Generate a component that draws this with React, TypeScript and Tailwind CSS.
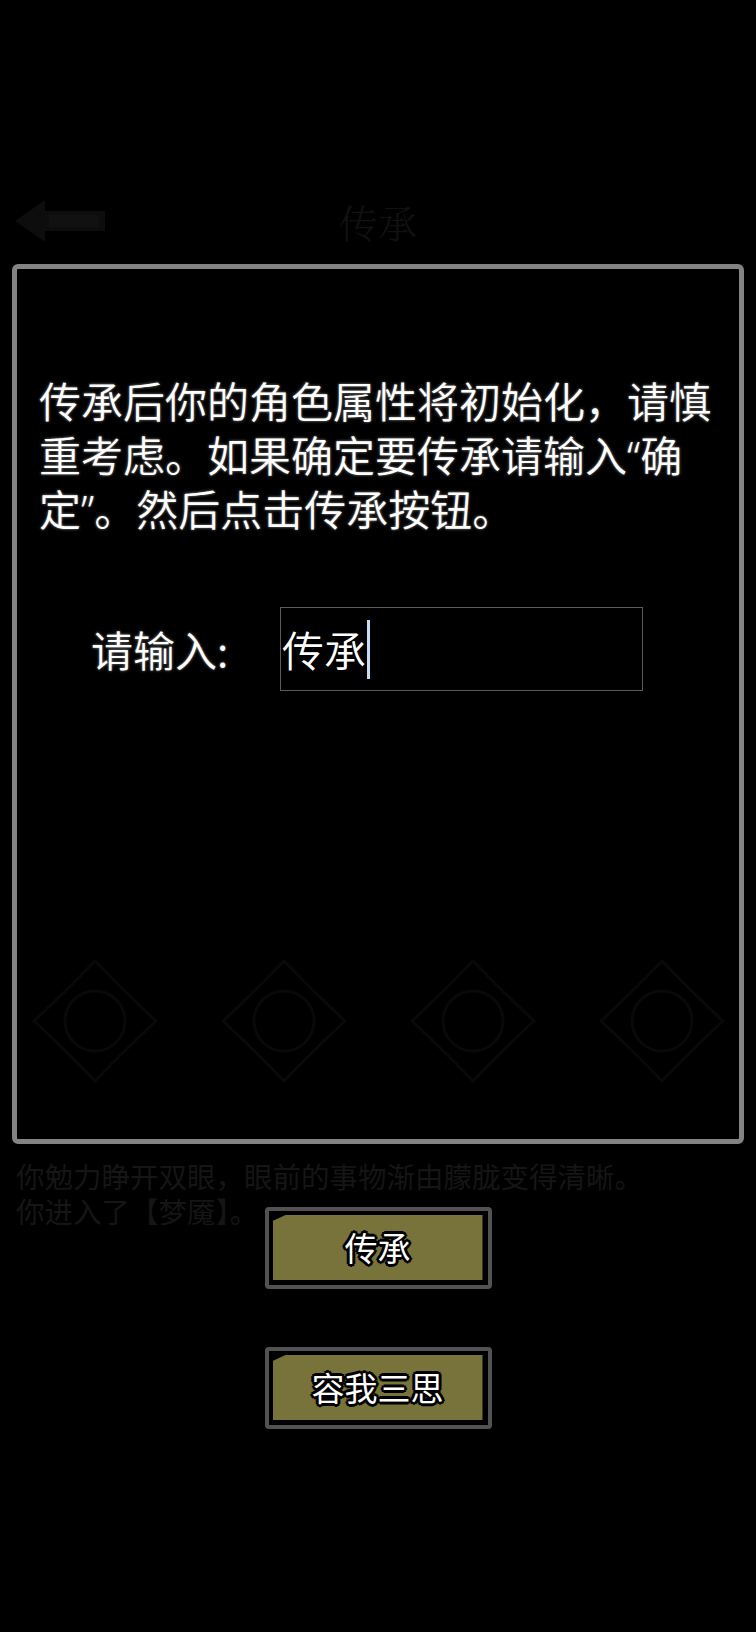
const cjk = "font-['Noto_Sans_CJK_SC','Noto_Sans',sans-serif]";

const outline =
  "[text-shadow:-2px_-2px_0_#000,2px_-2px_0_#000,-2px_2px_0_#000,2px_2px_0_#000,0_-3px_0_#000,0_3px_0_#000,-3px_0_0_#000,3px_0_0_#000]";

// narrow curly quotes, as the game font draws them
function Q({ c }: { c: string }) {
  return <span className="font-['Noto_Sans',sans-serif] leading-none">{c}</span>;
}

function Diamond() {
  return (
    <svg width="130" height="128" viewBox="0 0 130 128" fill="none" stroke="#090909" strokeWidth="3">
      <path d="M65 4 Q100 40 126 64 Q100 88 65 124 Q30 88 4 64 Q30 40 65 4 Z" />
      <circle cx="65" cy="64" r="30" />
    </svg>
  );
}

function BackArrow() {
  return (
    <svg width="90" height="42" viewBox="0 0 90 42">
      <path d="M0 21 L30 0 L30 11 L90 11 L90 31 L30 31 L30 42 Z" fill="#0d0d0d" />
      <rect x="34" y="15" width="50" height="12" fill="#111" />
    </svg>
  );
}

// Page under the dialog, dimmed nearly to black
function DimmedPage() {
  return (
    <div className="flex flex-col">
      <div className="grid grid-cols-[1fr_auto_1fr] items-center pt-[199px] px-[15px] h-[243px]">
        <BackArrow />
        <span className="text-[39px] leading-[44px] text-[#111] font-['Noto_Serif_CJK_SC','Noto_Sans_CJK_SC',serif] [font-weight:300]">
          传承
        </span>
        <span />
      </div>
      <div className="grid grid-cols-4 justify-items-center mt-[714px] h-[128px]">
        <Diamond />
        <Diamond />
        <Diamond />
        <Diamond />
      </div>
      <div className="mt-[73px] pl-[16px] text-[28.5px] leading-[35px] text-[#151515]">
        <p>你勉力睁开双眼，眼前的事物渐由朦胧变得清晰。</p>
        <p>你进入了【梦魇】。</p>
      </div>
    </div>
  );
}

function GameButton({ label }: { label: string }) {
  return (
    <button className="w-[227px] h-[82px] border-4 border-[#525252] rounded-[4px] bg-black pt-[4px] pl-[4px] pr-[5px] pb-[5px]">
      <div className="h-full bg-[#77733b] flex items-center justify-center [clip-path:polygon(13px_0,100%_0,100%_100%,0_100%,0_6px)]">
        <span className={`text-[33px] leading-none text-white ${outline}`}>{label}</span>
      </div>
    </button>
  );
}

export default function App() {
  const glow = "[text-shadow:0_0_3px_rgba(190,190,190,0.75)]";
  return (
    <div className={`relative w-full min-h-[1632px] bg-black overflow-hidden ${cjk}`}>
      <DimmedPage />

      <div className="absolute inset-0 flex flex-col items-center pt-[264px]">
        <div className="w-[732px] h-[880px] border-[5px] border-[#838383] rounded-[6px]">
          <div className={`pt-[104px] pl-[22px] text-[42px] leading-[54px] text-white whitespace-nowrap [font-weight:350] ${glow}`}>
            <p className="h-[54px]">传承后你的角色属性将初始化，请慎</p>
            <p className="h-[54px]">
              重考虑。如果确定要传承请输入<Q c="“" />确
            </p>
            <p className="h-[54px]">
              定<Q c="”" />。然后点击传承按钮。
            </p>
          </div>

          <div className="flex items-center mt-[72px] pl-[74px] [font-weight:350]">
            <span className={`w-[189px] text-[42px] leading-none text-white ${glow}`}>请输入:</span>
            <div className="w-[363px] h-[84px] border border-[#5c5c5c] flex items-center pl-[1px]">
              <span className="text-[42px] leading-none text-white">传承</span>
              <span className="inline-block w-[3px] h-[59px] ml-[1px] bg-[#c6dcf2]" />
            </div>
          </div>
        </div>

        <div className="mt-[63px]">
          <GameButton label="传承" />
        </div>
        <div className="mt-[58px]">
          <GameButton label="容我三思" />
        </div>
      </div>
    </div>
  );
}
